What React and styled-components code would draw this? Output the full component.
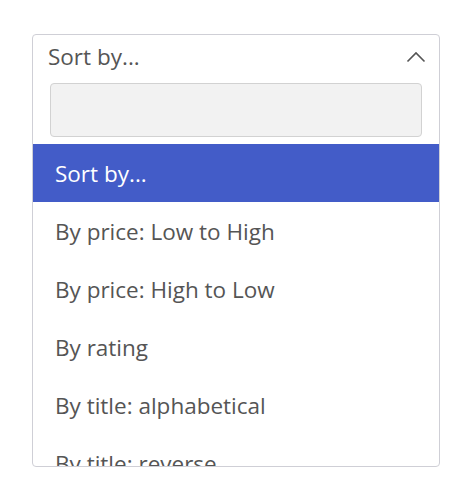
import React from 'react';
import styled, { createGlobalStyle } from 'styled-components';

const GlobalStyle = createGlobalStyle`
  body {
    margin: 0;
    background: #ffffff;
    font-family: 'Open Sans', 'Noto Sans', sans-serif;
  }
`;

const Page = styled.div`
  padding: 34px 0 0 32px;
`;

const Dropdown = styled.div`
  width: 408px;
  height: 433px;
  box-sizing: border-box;
  border: 1px solid #cfcfd6;
  border-radius: 4px;
  overflow: hidden;
  display: flex;
  flex-direction: column;
  background: #fff;
`;

const Header = styled.div`
  height: 48px;
  box-sizing: border-box;
  display: flex;
  align-items: center;
  justify-content: space-between;
  padding: 0 13px 5px 15px;
  color: #555;
  font-size: 22.5px;
  flex-shrink: 0;
`;

const SearchWrap = styled.div`
  padding: 0 17px 7px 17px;
  flex-shrink: 0;
`;

const Search = styled.input`
  display: block;
  width: 100%;
  height: 54px;
  box-sizing: border-box;
  background: #f2f2f2;
  border: 1px solid #d2d2d2;
  border-radius: 4px;
  outline: none;
`;

const Option = styled.div`
  height: 58px;
  flex-shrink: 0;
  display: flex;
  align-items: center;
  padding-left: 22px;
  font-size: 22.5px;
  color: ${p => (p.$active ? '#ffffff' : '#555555')};
  background: ${p => (p.$active ? '#435cc8' : 'transparent')};
`;

const options = [
  'Sort by...',
  'By price: Low to High',
  'By price: High to Low',
  'By rating',
  'By title: alphabetical',
  'By title: reverse',
];

export default function App() {
  return (
    <>
      <GlobalStyle />
      <Page>
        <Dropdown>
          <Header>
            <span>Sort by...</span>
            <svg width="20" height="14" viewBox="0 0 20 14" fill="none">
              <path d="M1.5 11.5 L10 3 L18.5 11.5" stroke="#555" strokeWidth="1.6" />
            </svg>
          </Header>
          <SearchWrap>
            <Search type="text" />
          </SearchWrap>
          {options.map((o, i) => (
            <Option key={o} $active={i === 0}>{o}</Option>
          ))}
        </Dropdown>
      </Page>
    </>
  );
}
